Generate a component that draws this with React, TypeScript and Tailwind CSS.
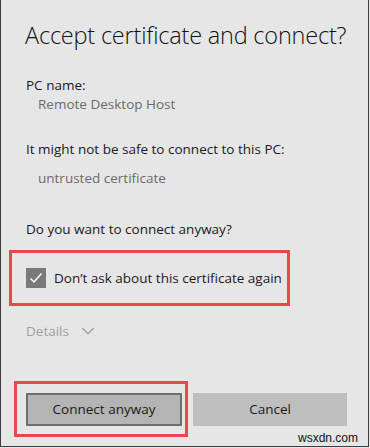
import { ChevronDown } from "lucide-react";

const font = { fontFamily: '"Open Sans", "Noto Sans", sans-serif' };

const App = () => {
  return (
    <div
      className="relative h-[448px] w-[370px] overflow-hidden bg-[#e6e6e6] text-[#1a1a1a]"
      style={font}
    >
      <div className="flex h-[447px] w-[369px] flex-col border-r border-b border-l border-[#3c3c3c]">
        {/* title */}
        <h1 className="mt-[20px] pl-[24px] text-[23.5px] leading-[30px] font-light tracking-[-0.2px] text-[#111]">
          Accept certificate and connect?
        </h1>

        {/* info */}
        <div className="mt-[26px] pl-[25px] text-[13.5px] leading-[18px]">
          <p>PC name:</p>
          <p className="mt-[1px] pl-[12px] text-[#6b6b6b]">Remote Desktop Host</p>
          <p className="mt-[27px]">It might not be safe to connect to this PC:</p>
          <p className="mt-[11px] pl-[12px] text-[#6b6b6b]">untrusted certificate</p>
          <p className="mt-[33px]">Do you want to connect anyway?</p>
        </div>

        {/* checkbox */}
        <div className="mt-[12px] ml-[8px] flex h-[56px] w-[281px] items-center border-[3px] border-[#e8474c] pl-[14px]">
          <span className="flex h-[20px] w-[20px] shrink-0 items-center justify-center bg-[#7a7a7a]">
            <svg width="14" height="14" viewBox="0 0 14 14" fill="none">
              <path d="M1.5 7.5 L5 11 L12.5 2.5" stroke="#fff" strokeWidth="1.5" />
            </svg>
          </span>
          <span className="ml-[8px] text-[13.5px] leading-[18px] whitespace-nowrap">
            Don’t ask about this certificate again
          </span>
        </div>

        {/* details */}
        <div className="mt-[14px] flex items-center gap-[8px] pl-[25px] text-[13.5px] text-[#a0a0a0]">
          <span>Details</span>
          <ChevronDown size={22} strokeWidth={1.2} className="text-[#9c9c9c]" />
        </div>

        {/* buttons */}
        <div className="mt-auto mb-[9px] flex items-center pr-[21px]">
          <div className="ml-[13px] flex h-[56px] w-[174px] items-center border-[3px] border-[#e8474c] pl-[9px]">
            <button className="h-[33px] w-[156px] border-2 border-[#6e6e6e] bg-[#b4b4b4] text-[13.5px] text-[#1a1a1a]">
              Connect anyway
            </button>
          </div>
          <button className="ml-[5px] h-[33px] flex-1 bg-[#bebebe] text-[13.5px] text-[#1a1a1a]">
            Cancel
          </button>
        </div>
      </div>

      <span
        className="absolute right-[12px] bottom-[3px] text-[12px] leading-[14px] text-[#111]"
        style={{ fontFamily: '"Liberation Sans", Arial, sans-serif' }}
      >
        wsxdn.com
      </span>
    </div>
  );
};

export default App;
